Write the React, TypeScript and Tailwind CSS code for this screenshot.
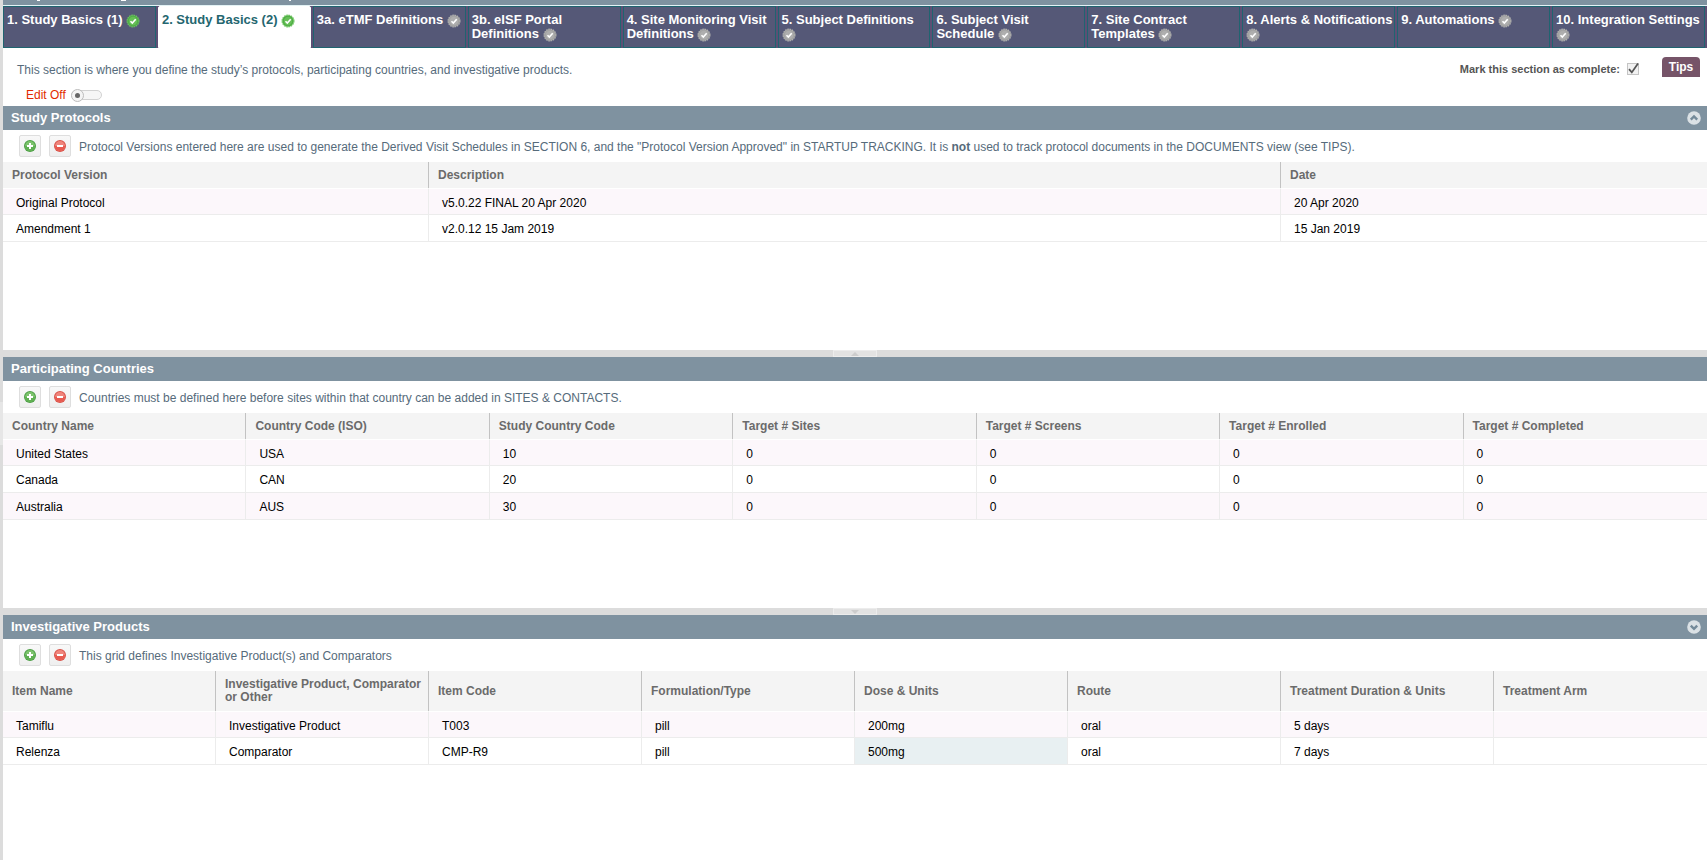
import React, { useState } from 'react';

type Tab = {
  label: string;
  complete?: boolean;
};

type Column = {
  label: string;
  width: string;
};

interface GridPanelProps {
  title: string;
  note: React.ReactNode;
  columns: Column[];
  rows: string[][];
  headClass: string;
  className: string;
  collapse?: 'up' | 'down';
  selected?: [number, number];
}

const tabs: Tab[] = [
  { label: '1. Study Basics (1)', complete: true },
  { label: '2. Study Basics (2)', complete: true },
  { label: '3a. eTMF Definitions' },
  { label: '3b. eISF Portal Definitions' },
  { label: '4. Site Monitoring Visit Definitions' },
  { label: '5. Subject Definitions' },
  { label: '6. Subject Visit Schedule' },
  { label: '7. Site Contract Templates' },
  { label: '8. Alerts & Notifications' },
  { label: '9. Automations' },
  { label: '10. Integration Settings' },
];

const protocolColumns: Column[] = [
  { label: 'Protocol Version', width: 'w-1/4' },
  { label: 'Description', width: 'w-1/2' },
  { label: 'Date', width: 'w-1/4' },
];

const protocolRows = [
  ['Original Protocol', 'v5.0.22 FINAL 20 Apr 2020', '20 Apr 2020'],
  ['Amendment 1', 'v2.0.12 15 Jam 2019', '15 Jan 2019'],
];

const countryColumns: Column[] = [
  { label: 'Country Name', width: 'w-1/7' },
  { label: 'Country Code (ISO)', width: 'w-1/7' },
  { label: 'Study Country Code', width: 'w-1/7' },
  { label: 'Target # Sites', width: 'w-1/7' },
  { label: 'Target # Screens', width: 'w-1/7' },
  { label: 'Target # Enrolled', width: 'w-1/7' },
  { label: 'Target # Completed', width: 'w-1/7' },
];

const countryRows = [
  ['United States', 'USA', '10', '0', '0', '0', '0'],
  ['Canada', 'CAN', '20', '0', '0', '0', '0'],
  ['Australia', 'AUS', '30', '0', '0', '0', '0'],
];

const productColumns: Column[] = [
  { label: 'Item Name', width: 'w-1/8' },
  { label: 'Investigative Product, Comparator or Other', width: 'w-1/8' },
  { label: 'Item Code', width: 'w-1/8' },
  { label: 'Formulation/Type', width: 'w-1/8' },
  { label: 'Dose & Units', width: 'w-1/8' },
  { label: 'Route', width: 'w-1/8' },
  { label: 'Treatment Duration & Units', width: 'w-1/8' },
  { label: 'Treatment Arm', width: 'w-1/8' },
];

const productRows = [
  ['Tamiflu', 'Investigative Product', 'T003', 'pill', '200mg', 'oral', '5 days', ''],
  ['Relenza', 'Comparator', 'CMP-R9', 'pill', '500mg', 'oral', '7 days', ''],
];

const StatusIcon = ({ complete }: { complete?: boolean }) => (
  <svg viewBox="0 0 14 14" className="inline-block size-[14px] -my-1 align-middle" aria-hidden="true">
    <circle cx="7" cy="7" r="5.8" fill={complete ? '#4fae45' : '#a3a3a3'} />
    <circle
      cx="7"
      cy="7"
      r="5.9"
      fill="none"
      stroke={complete ? '#6cc45f' : '#b4b4b0'}
      strokeWidth="1.2"
      strokeDasharray="1.6 0.7"
    />
    <circle cx="7" cy="7" r="4.2" fill={complete ? '#66bf57' : '#aeaeae'} />
    <path d="M4.5 7.2 6.3 9 9.7 5.2" fill="none" stroke="#fff" strokeWidth="1.6" />
  </svg>
);

const AddIcon = () => (
  <svg viewBox="0 0 14 14" className="size-[14px]" aria-hidden="true">
    <circle cx="7" cy="7" r="6" fill="#4c9f45" />
    <circle cx="7" cy="7" r="5" fill="#7cc36c" />
    <path d="M2 7a5 5 0 0 0 10 0z" fill="#5fb052" />
    <path d="M7 4v6M4 7h6" stroke="#fff" strokeWidth="2" />
  </svg>
);

const RemoveIcon = () => (
  <svg viewBox="0 0 14 14" className="size-[14px]" aria-hidden="true">
    <circle cx="7" cy="7" r="6" fill="#d9534a" />
    <circle cx="7" cy="7" r="5" fill="#f0857c" />
    <path d="M2 7a5 5 0 0 0 10 0z" fill="#e85a50" />
    <path d="M4 7h6" stroke="#fff" strokeWidth="2" />
  </svg>
);

const toolButtonClass =
  'flex size-[22px] items-center justify-center rounded-xs border border-[#dedede] bg-linear-to-b from-[#f8f8f8] to-[#efefef]';

const GridPanel: React.FC<GridPanelProps> = ({
  title,
  note,
  columns,
  rows,
  headClass,
  className,
  collapse,
  selected,
}) => {
  return (
    <section className={'bg-white ' + className}>
      <div className="flex h-6 items-center justify-between bg-[#7f92a0] pl-2 pr-1.5">
        <h2 className="text-[13px] leading-4 font-bold text-white">{title}</h2>
        {collapse && (
          <button type="button" aria-label={'Collapse ' + title}>
            <svg viewBox="0 0 14 14" className="size-[14px]">
              <circle cx="7" cy="7" r="6.8" fill="#dbe1e5" />
              <path
                d={collapse === 'up' ? 'M3.8 8.6 7 5.4l3.2 3.2' : 'M3.8 5.6 7 8.8l3.2-3.2'}
                fill="none"
                stroke="#748a99"
                strokeWidth="2.4"
              />
            </svg>
          </button>
        )}
      </div>

      <div className="flex h-8 items-center pl-4">
        <button type="button" aria-label="Add row" className={toolButtonClass}>
          <AddIcon />
        </button>
        <button type="button" aria-label="Remove row" className={toolButtonClass + ' ml-2'}>
          <RemoveIcon />
        </button>
        <p className="ml-2 pt-0.5 text-xs text-[#566b7b]">{note}</p>
      </div>

      <table className="w-full table-fixed border-separate border-spacing-0 text-left text-xs">
        <thead>
          <tr className={headClass}>
            {columns.map((c) => (
              <th
                key={c.label}
                className={
                  'border-r border-[#c2c2c2] bg-[#f4f4f4] py-0 pl-[9px] pr-0.5 leading-[13px] font-bold text-[#6b6b6b] last:border-r-0 ' +
                  c.width
                }
              >
                {c.label}
              </th>
            ))}
          </tr>
        </thead>
        <tbody>
          {rows.map((row, r) => (
            <tr key={r} className="group h-[27px] odd:bg-[#fcf7fb]">
              {row.map((cell, i) => (
                <td
                  key={i}
                  className={
                    'border-r border-b border-[#ececec] pt-0.5 pb-0 pl-[13px] text-black group-first:border-t group-first:border-t-white last:border-r-0' +
                    (selected && selected[0] === r && selected[1] === i ? ' bg-[#e8f0f2]' : '')
                  }
                >
                  {cell}
                </td>
              ))}
            </tr>
          ))}
        </tbody>
      </table>
    </section>
  );
};

const Splitter = ({ direction }: { direction: 'up' | 'down' }) => (
  <div className="flex h-[7px] shrink-0 justify-center bg-[#dcdcdc]">
    <button
      type="button"
      aria-label="Resize panels"
      className="flex w-11 items-center justify-center border border-[#ececec] bg-[#e2e2e2]"
    >
      <svg viewBox="0 0 8 4" className="h-1 w-2">
        <path d={direction === 'up' ? 'M0 4 4 0l4 4z' : 'M0 0l4 4 4-4z'} fill="#cccccc" />
      </svg>
    </button>
  </div>
);

export default function App() {
  const [active, setActive] = useState(1);
  const [editing, setEditing] = useState(false);
  const [done, setDone] = useState(true);

  return (
    <div className="relative flex min-h-screen flex-col border-l-3 border-[#dcdcdc] bg-white font-['Liberation_Sans',Arial,sans-serif]">
      {/* Handle of the collapsed side panel */}
      <div className="absolute top-[402px] -left-[3px] h-[43px] w-[3px] bg-[#e6e6e6]" />

      {/* Bottom edge of the page title bar */}
      <div className="h-[6px] shrink-0 border-b border-[#e3f2f4] bg-[#7f92a0]">
        <svg width="300" height="1" className="block" aria-hidden="true">
          <path d="M34 .5h3M118 .5h5M286 .5h2" stroke="#fff" />
        </svg>
      </div>

      {/* Section tabs */}
      <nav className="grid shrink-0 grid-cols-11 bg-[#5c4f74]">
        {tabs.map((tab, i) => (
          <button
            key={tab.label}
            type="button"
            onClick={() => setActive(i)}
            className={
              'mr-0.5 h-[42px] border pt-1.5 pl-[3px] text-left text-[13px] leading-[14px] font-bold ' +
              (i === active
                ? 'rounded-t-xs border-white bg-white text-[#24666f]'
                : 'border-[#1f6470] bg-[#555877] text-white')
            }
          >
            <span className="block h-full">
              {tab.label} <StatusIcon complete={tab.complete} />
            </span>
          </button>
        ))}
      </nav>

      {/* Intro and section controls */}
      <div className="flex h-[58px] shrink-0 items-start justify-between">
        <div>
          <p className="pt-[14px] pl-[14px] text-xs text-[#566b7b]">
            This section is where you define the study’s protocols, participating countries, and investigative products.
          </p>
          <label className="mt-[9px] ml-[23px] flex w-fit items-center gap-[5px] text-xs text-[#e22b00]">
            {editing ? 'Edit On' : 'Edit Off'}
            <input
              type="checkbox"
              role="switch"
              className="peer sr-only"
              checked={editing}
              onChange={(e) => setEditing(e.target.checked)}
            />
            <span className="flex h-2.5 w-[31px] items-center rounded-full border border-[#d2d2d2] bg-[#f6f6f6] peer-checked:justify-end">
              <span className="-mx-px flex size-[13px] items-center justify-center rounded-full border border-[#bdbdbd] bg-[#f4f4f4]">
                <span className="size-[5px] rounded-full bg-[#666]" />
              </span>
            </span>
          </label>
        </div>
        <div className="flex items-start pr-[7px]">
          <label className="mt-[13px] flex items-center gap-[7px] text-[11px] leading-4 font-bold text-[#555]">
            Mark this section as complete:
            <span className="relative size-3">
              <input
                type="checkbox"
                className="block size-3 appearance-none border border-[#c4c4c4] bg-[#f2f2f2]"
                checked={done}
                onChange={(e) => setDone(e.target.checked)}
              />
              {done && (
                <svg viewBox="0 0 12 12" className="pointer-events-none absolute inset-0 size-3 overflow-visible">
                  <path d="M2 6.2 4.8 9.4 11 .6" fill="none" stroke="#555" strokeWidth="1.8" />
                </svg>
              )}
            </span>
          </label>
          <button
            type="button"
            className="mt-[9px] ml-[23px] h-5 w-[38px] rounded-t-sm bg-[#765468] text-center text-xs font-bold text-white"
          >
            Tips
          </button>
        </div>
      </div>

      <GridPanel
        title="Study Protocols"
        note={
          <>
            Protocol Versions entered here are used to generate the Derived Visit Schedules in SECTION 6, and the
            "Protocol Version Approved" in STARTUP TRACKING. It is <b>not</b> used to track protocol documents in the
            DOCUMENTS view (see TIPS).
          </>
        }
        columns={protocolColumns}
        rows={protocolRows}
        headClass="h-[26px]"
        className="min-h-[244px]"
        collapse="up"
      />
      <Splitter direction="up" />
      <GridPanel
        title="Participating Countries"
        note="Countries must be defined here before sites within that country can be added in SITES & CONTACTS."
        columns={countryColumns}
        rows={countryRows}
        headClass="h-[26px]"
        className="min-h-[251px]"
      />
      <Splitter direction="down" />
      <GridPanel
        title="Investigative Products"
        note="This grid defines Investigative Product(s) and Comparators"
        columns={productColumns}
        rows={productRows}
        headClass="h-10"
        className="flex-1"
        collapse="down"
        selected={[1, 4]}
      />
    </div>
  );
}
